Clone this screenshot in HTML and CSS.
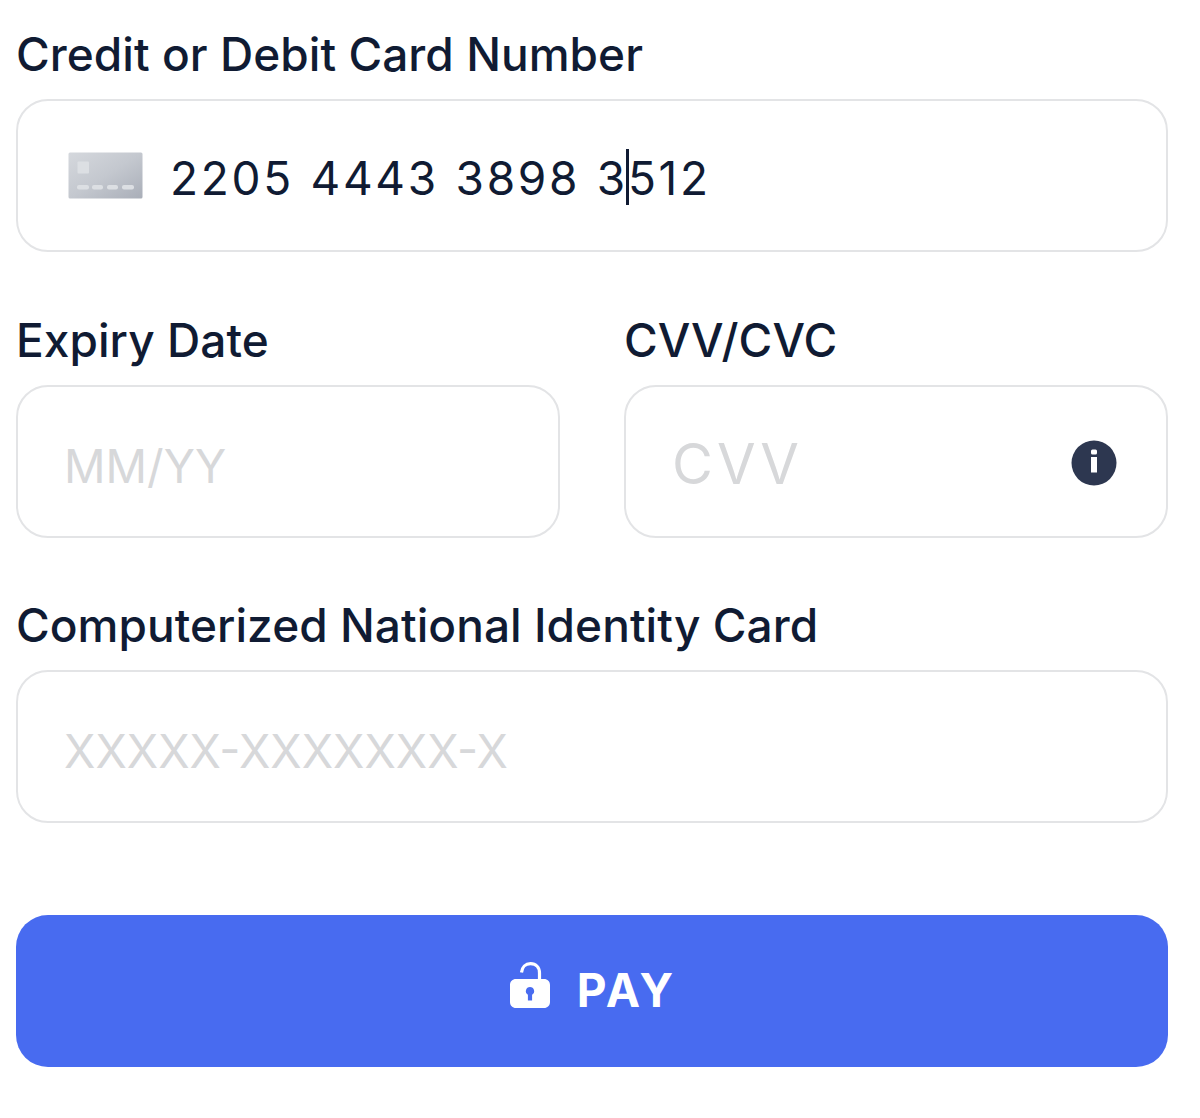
FILE: index.html
```html
<!DOCTYPE html>
<html lang="en">
<head>
    <meta charset="UTF-8">
    <title>Payment</title>
    <link rel="stylesheet" href="styles.css">
</head>
<body>
    <form class="pay-form">
        <div class="field">
            <label class="label">Credit or Debit Card Number</label>
            <div class="box box-card">
                <svg class="card-icon" width="75" height="47" viewBox="0 0 75 47">
                    <defs>
                        <linearGradient id="cardFill" x1="0" y1="0" x2="1" y2="1">
                            <stop offset="0" stop-color="#d5d8dd"/>
                            <stop offset="0.5" stop-color="#c4c8cf"/>
                            <stop offset="1" stop-color="#a9aeb8"/>
                        </linearGradient>
                    </defs>
                    <rect x="0.5" y="0.5" width="74" height="46" rx="1.500" fill="url(#cardFill)"/>
                    <rect x="9.500" y="9.500" width="11.500" height="12" rx="1" fill="#dcdfe3"/>
                    <rect x="9" y="33" width="12" height="4.500" rx="2" fill="#dcdfe3"/>
                    <rect x="24" y="33" width="11" height="4.500" rx="2" fill="#dcdfe3"/>
                    <rect x="39" y="33" width="11" height="4.500" rx="2" fill="#dcdfe3"/>
                    <rect x="54" y="33" width="12" height="4.500" rx="2" fill="#dcdfe3"/>
                </svg>
                <span class="card-number">2205 4443 3898 3<span class="caret"></span>512</span>
            </div>
        </div>

        <div class="row">
            <div class="field">
                <label class="label">Expiry Date</label>
                <div class="box">
                    <span class="placeholder">MM/YY</span>
                </div>
            </div>
            <div class="field">
                <label class="label">CVV/CVC</label>
                <div class="box box-cvv">
                    <span class="placeholder placeholder-wide">CVV</span>
                    <svg class="info-icon" width="46" height="46" viewBox="0 0 46 46">
                        <circle cx="23" cy="23" r="22.500" fill="#2d3750"/>
                        <rect x="20" y="17" width="6" height="15.500" fill="#fff"/>
                        <rect x="20" y="9.500" width="6" height="5" rx="1.500" fill="#fff"/>
                    </svg>
                </div>
            </div>
        </div>

        <div class="field">
            <label class="label">Computerized National Identity Card</label>
            <div class="box">
                <span class="placeholder">XXXXX-XXXXXXX-X</span>
            </div>
        </div>

        <button class="pay-btn" type="button">
            <svg class="lock-icon" width="40" height="46" viewBox="0 0 40 46">
                <path d="M11.500 10.500 C12 5 15.500 1.700 20.500 1.700 C26 1.700 29.500 5.500 29.500 11 V20" fill="none" stroke="#fff" stroke-width="3.200"/>
                <path d="M6 17 H34 C37.500 17 40 19.500 40 23 V40 C40 43.500 37.500 46 34 46 H6 C2.500 46 0 43.500 0 40 V23 C0 19.500 2.500 17 6 17 Z M20 25 A4.200 4.200 0 0 0 17.900 32.800 V38.500 H22.100 V32.800 A4.200 4.200 0 0 0 20 25 Z" fill="#fff" fill-rule="evenodd"/>
            </svg>
            <span>PAY</span>
        </button>
    </form>
</body>
</html>
```

FILE: styles.css
```css
html, body {
  margin: 0;
  padding: 0;
  background: #fff;
}

body {
  font-family: Inter, "Noto Sans", sans-serif;
  color: #101b33;
}

.pay-form {
  display: flex;
  flex-direction: column;
  width: 1152px;
  margin-left: 16px;
  padding-top: 26px;
}

.field {
  display: flex;
  flex-direction: column;
  flex: 1;
  margin-bottom: 59px;
}

.row {
  display: flex;
  gap: 64px;
  padding-top: 1px;
}

.label {
  font-size: 46px;
  font-weight: 500;
  line-height: 56px;
  letter-spacing: 0.05px;
  margin-bottom: 17px;
}

.box {
  display: flex;
  align-items: center;
  box-sizing: border-box;
  height: 153px;
  padding: 0 46px;
  border: 2px solid #e3e4e6;
  border-radius: 32px;
  background: #fff;
}

.box-card {
  padding-left: 50px;
}

.box-cvv {
  justify-content: space-between;
}

.card-icon {
  margin-right: 27px;
  margin-top: -1px;
}

.card-number {
  font-size: 46px;
  letter-spacing: 2.700px;
  word-spacing: 1px;
  position: relative;
  top: 2px;
}

.caret {
  display: inline-block;
  width: 3px;
  height: 56px;
  margin: 0 -1px 0 -2px;
  vertical-align: -10px;
  background: #101b33;
}

.placeholder {
  font-size: 46px;
  color: #d7d8da;
  position: relative;
  top: 4px;
}

.placeholder-wide {
  font-size: 56px;
  letter-spacing: 4px;
  top: 2px;
}

.info-icon {
  margin-right: 3px;
  margin-top: 3px;
}

.pay-btn {
  display: flex;
  align-items: center;
  justify-content: center;
  gap: 27px;
  height: 152px;
  margin-top: 33px;
  padding: 0 0 2px 2px;
  border: none;
  border-radius: 32px;
  background: #486bf0;
  color: #fff;
  font-family: inherit;
  font-size: 46px;
  font-weight: 700;
  letter-spacing: 3px;
}

.lock-icon {
  margin-top: -10px;
}
```
